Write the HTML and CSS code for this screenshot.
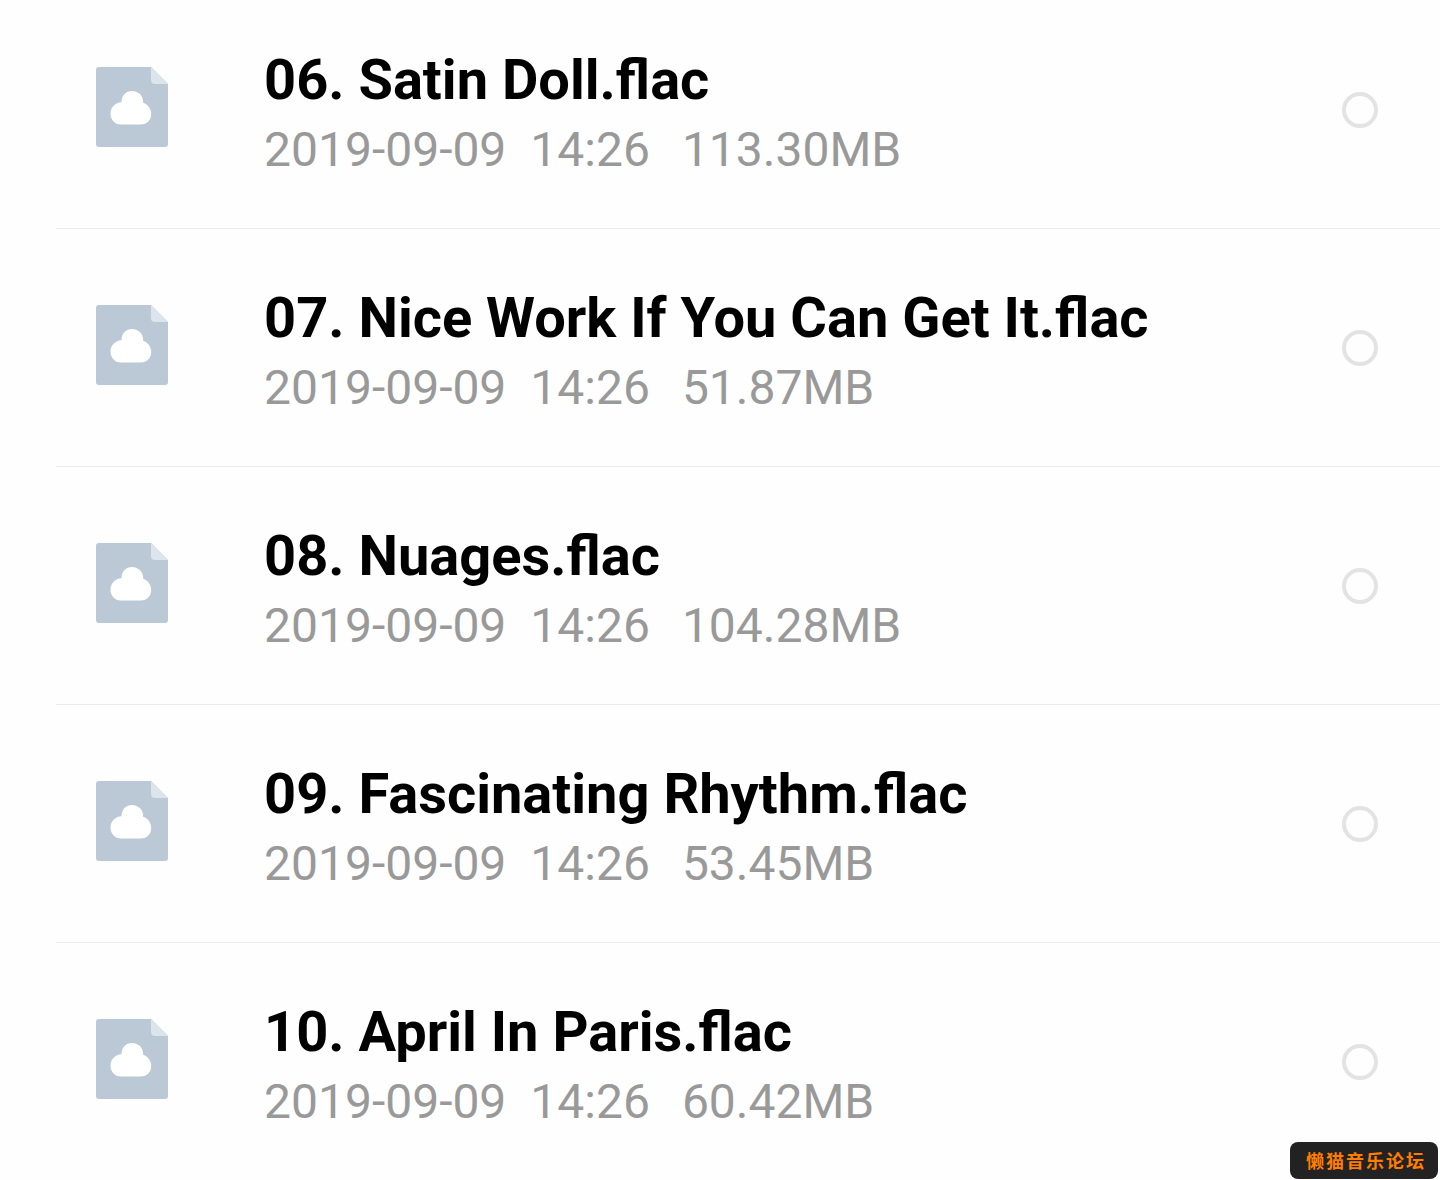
FILE: index.html
```html
<!DOCTYPE html>
<html lang="en">
<head>
<meta charset="utf-8">
<title>Files</title>
<meta name="viewport" content="width=device-width, initial-scale=1">
<link rel="stylesheet" href="styles.css">
</head>
<body>
<svg class="defs" aria-hidden="true">
<symbol id="file" viewBox="0 0 72 80">
<path fill="#bac9d5" d="M3 0H55L72 17V77Q72 80 69 80H3Q0 80 0 77V3Q0 0 3 0Z"/>
<path fill="#dce5ec" d="M55 0L72 17H59Q55 17 55 13Z"/>
<path fill="#fff" d="M25 57.500C18.500 57.500 14.500 52.500 14.500 46.500C14.500 40.500 19 35.500 25.500 35.200C25.500 28.500 30 24 36 24C42.500 24 47.500 29 47.200 35.800C52 37.500 55.200 42 55.200 47C55.200 53 51 57.500 45 57.500Z"/>
</symbol>
</svg>
<main>
<ul class="files">
<li class="file"><svg class="icon" aria-hidden="true"><use href="#file"/></svg><label class="info" for="f6"><span class="name">06. Satin Doll.flac</span><span class="meta"><span class="date">2019-09-09</span><span class="time">14:26</span><span>113.30MB</span></span></label><input class="pick" type="checkbox" id="f6"></li>
<li class="file"><svg class="icon" aria-hidden="true"><use href="#file"/></svg><label class="info" for="f7"><span class="name">07. Nice Work If You Can Get It.flac</span><span class="meta"><span class="date">2019-09-09</span><span class="time">14:26</span><span>51.87MB</span></span></label><input class="pick" type="checkbox" id="f7"></li>
<li class="file"><svg class="icon" aria-hidden="true"><use href="#file"/></svg><label class="info" for="f8"><span class="name">08. Nuages.flac</span><span class="meta"><span class="date">2019-09-09</span><span class="time">14:26</span><span>104.28MB</span></span></label><input class="pick" type="checkbox" id="f8"></li>
<li class="file"><svg class="icon" aria-hidden="true"><use href="#file"/></svg><label class="info" for="f9"><span class="name">09. Fascinating Rhythm.flac</span><span class="meta"><span class="date">2019-09-09</span><span class="time">14:26</span><span>53.45MB</span></span></label><input class="pick" type="checkbox" id="f9"></li>
<li class="file"><svg class="icon" aria-hidden="true"><use href="#file"/></svg><label class="info" for="f10"><span class="name">10. April In Paris.flac</span><span class="meta"><span class="date">2019-09-09</span><span class="time">14:26</span><span>60.42MB</span></span></label><input class="pick" type="checkbox" id="f10"></li>
</ul>
</main>
<div class="badge" lang="zh-CN">懒猫音乐论坛</div>
</body>
</html>
```
FILE: styles.css
```css
* { box-sizing: border-box; }
body {
  margin: 0;
  background: #fefefe;
  font-family: Roboto, "Liberation Sans", sans-serif;
}
.defs { display: none; }
.files {
  margin: 0;
  padding: 0 0 0 56px;
  list-style: none;
}
.file {
  display: flex;
  align-items: flex-start;
  padding: 49px 62px 48px 40px;
  border-top: 1px solid #ebebeb;
}
.file:first-child {
  padding-top: 40px;
  border-top: 0;
}
.icon {
  flex: none;
  width: 72px;
  height: 80px;
  margin-top: 27px;
}
.info {
  flex: 1;
  min-width: 0;
  margin-left: 96px;
}
.name {
  display: block;
  font-size: 56px;
  font-weight: 700;
  line-height: 80px;
  color: #000;
}
.meta {
  display: flex;
  font-size: 48px;
  line-height: 60px;
  color: #999;
}
.date { margin-right: 24px; }
.time { margin-right: 32px; }
.pick {
  appearance: none;
  flex: none;
  width: 36px;
  height: 36px;
  margin: 52px 0 0;
  border: 4px solid #e3e3e3;
  border-radius: 50%;
}
.pick:checked { background: #bac9d5; }
.badge {
  position: fixed;
  right: 2px;
  bottom: 1px;
  padding: 0 12px 0 16px;
  border-radius: 8px;
  background: #222;
  color: #ff7d00;
  font: 700 18px/37px "Noto Sans CJK SC", sans-serif;
  letter-spacing: 2px;
}
```
